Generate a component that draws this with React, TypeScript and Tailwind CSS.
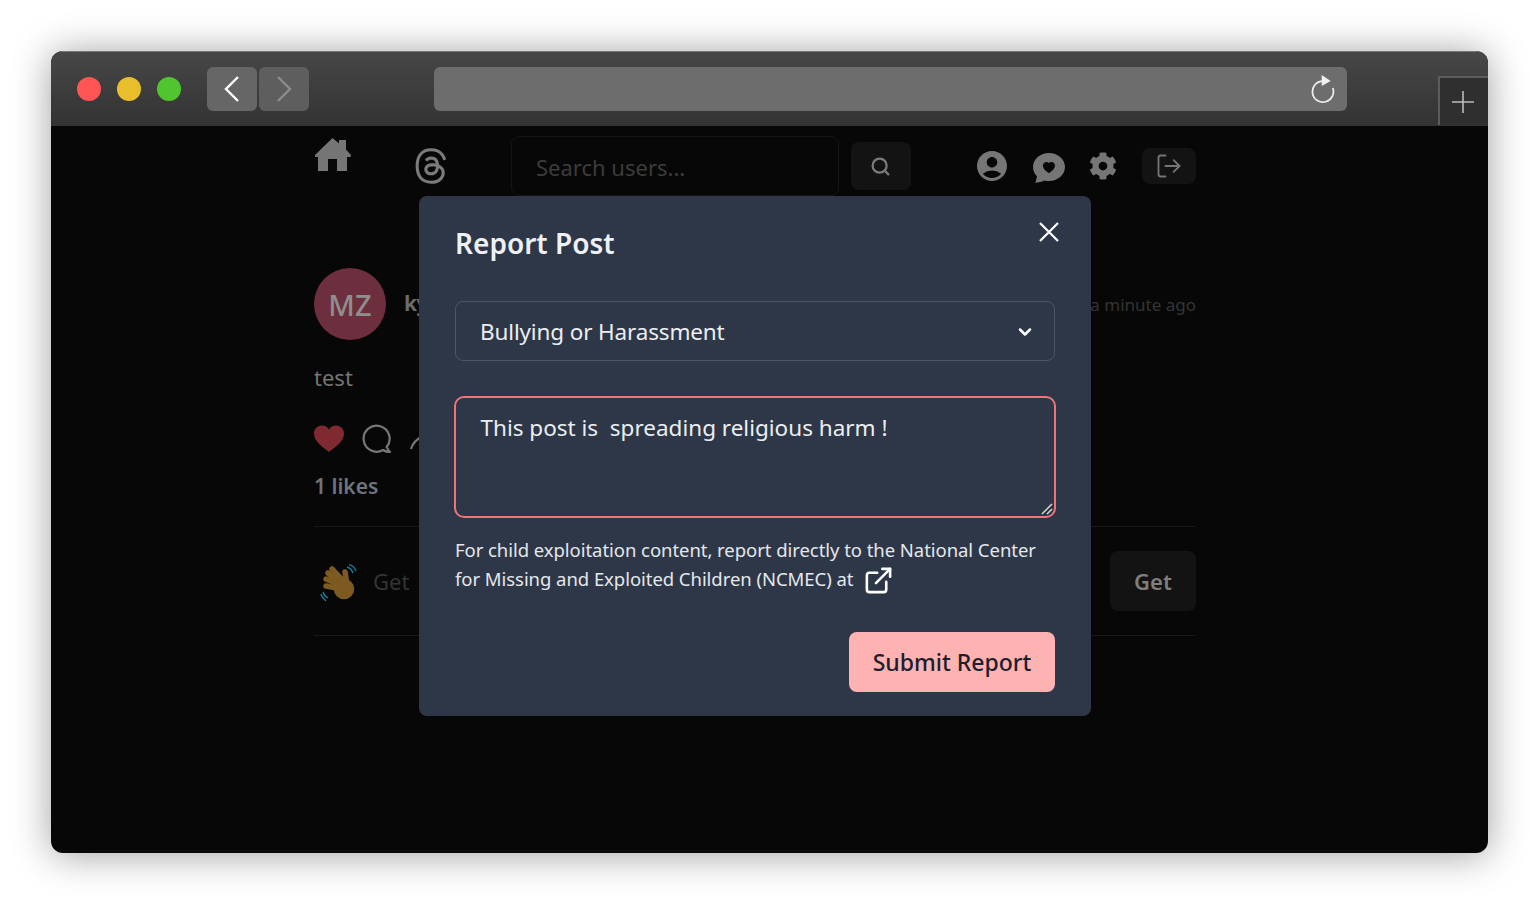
import { BsChatHeartFill } from "react-icons/bs";
import { FaCog } from "react-icons/fa";
import { FaThreads } from "react-icons/fa6";
import { MdAccountCircle } from "react-icons/md";
import { FiChevronDown, FiExternalLink, FiLogOut, FiSearch } from "react-icons/fi";

const fingers = ["M24 22 L8 9", "M24 23 L6 15", "M22 25 L6 22", "M26 20 L12 5"];

const WavingHand = () => (
    <svg width="38" height="38" viewBox="0 0 38 38">
        {fingers.map((d) => (
            <path key={d} d={d} stroke="#050505" strokeWidth="7.5" strokeLinecap="round" />
        ))}
        <path d="M27 20 L25 8" stroke="#050505" strokeWidth="7.5" strokeLinecap="round" />
        <circle cx="24" cy="25" r="11" fill="#7d5a1f" stroke="#050505" strokeWidth="1.5" />
        <path d="M27 20 L25 8" stroke="#7d5a1f" strokeWidth="5.5" strokeLinecap="round" />
        {fingers.map((d) => (
            <path key={d + "f"} d={d} stroke="#7d5a1f" strokeWidth="5.5" strokeLinecap="round" />
        ))}
        <path d="M27 3 Q31 4 33 9 M29 0.5 Q34 2 36 7 M3 28 Q4 32 8 34 M0.8 30 Q2 34 6 37" fill="none" stroke="#1c7f9c" strokeWidth="1.3" />
    </svg>
);

const Dot = ({ color }: { color: string }) => <div className={`w-6 h-6 rounded-full ${color}`} />;

const App = () => {
    return (
        <div className="w-[1539px] h-[904px] bg-white p-[51px] overflow-hidden font-['Noto_Sans',sans-serif]">
            <div className="relative w-[1437px] h-[802px] rounded-xl overflow-hidden bg-[#070707] shadow-[0_2px_38px_rgba(0,0,0,0.38)] flex flex-col">
                {/* browser chrome */}
                <div className="h-[75px] shrink-0 flex items-start bg-gradient-to-b from-[#474747] to-[#333333] border-t border-t-[#777777] pl-[26px]">
                    <div className="flex gap-4 mt-[25px]">
                        <Dot color="bg-[#ff5555]" />
                        <Dot color="bg-[#e8bf2a]" />
                        <Dot color="bg-[#51c52f]" />
                    </div>
                    <div className="flex gap-[2px] ml-[26px] mt-[15px]">
                        <div className="w-[50px] h-[44px] rounded-md bg-[#666666] flex items-center justify-center">
                            <svg width="16" height="26" viewBox="0 0 16 26"><path d="M14 1 L2 13 L14 25" fill="none" stroke="#fff" strokeWidth="2.4" /></svg>
                        </div>
                        <div className="w-[50px] h-[44px] rounded-md bg-[#5e5e5e] flex items-center justify-center">
                            <svg width="16" height="26" viewBox="0 0 16 26"><path d="M2 1 L14 13 L2 25" fill="none" stroke="#8c8c8c" strokeWidth="2.4" /></svg>
                        </div>
                    </div>
                    <div className="w-[913px] h-[44px] ml-[125px] mt-[15px] rounded-md bg-[#6d6d6d] flex items-center justify-end pr-[12px]">
                        <svg width="26" height="30" viewBox="0 0 26 30">
                            <path d="M13 7.2 A10.5 10.5 0 1 0 23.8 14" fill="none" stroke="#f0f0f0" strokeWidth="1.7" />
                            <path d="M12.7 1 L21.7 7 L12.7 12 Z" fill="#f0f0f0" />
                        </svg>
                    </div>
                    <div className="w-[50px] h-[49px] ml-auto mt-[24px] bg-[#2f2f2f] border-l-2 border-t-2 border-[#5c5c5c] pr-[3px] flex items-center justify-center">
                        <svg width="22" height="22" viewBox="0 0 22 22"><path d="M11 0 V22 M0 11 H22" stroke="#bcbcbc" strokeWidth="1.6" /></svg>
                    </div>
                </div>

                {/* dimmed page */}
                <div className="w-[882px] ml-[263px] flex flex-col">
                    <div className="flex items-start h-[142px]">
                        <svg width="36" height="33" viewBox="0 0 36 33" className="mt-[12px] ml-px shrink-0">
                            <path d="M17.5 0 L24 5.5 V2 H31 V11.5 L36 17 L35.5 19 H32 V33 H22 V21 H13 V33 H3 V19 H0 L0 17 Z" fill="#757575" />
                        </svg>
                        <FaThreads className="w-[36px] h-[38px] mt-[21px] ml-[62px] text-[#7b7b7b]" />
                        <div className="w-[328px] h-[60px] ml-[62px] mt-[10px] pt-[2px] rounded-lg border border-[#141414] flex items-center pl-[24px] text-[22px] text-[#3c3c3c]">
                            Search users...
                        </div>
                        <div className="w-[60px] h-[48px] ml-[12px] mt-[16px] rounded-lg bg-[#131313] flex items-center justify-center">
                            <FiSearch className="w-[21px] h-[21px] -ml-[2px] text-[#7a7a7a]" strokeWidth={2.6} />
                        </div>
                        <MdAccountCircle className="w-[36px] h-[36px] ml-[63px] mt-[22px] text-[#767676]" />
                        <BsChatHeartFill className="w-[32px] h-[32px] ml-[23px] mt-[25px] text-[#767676]" />
                        <FaCog className="w-[28px] h-[28px] ml-[24px] mt-[26px] text-[#767676]" />
                        <div className="w-[54px] h-[36px] ml-auto mt-[22px] rounded-lg bg-[#131313] flex items-center justify-center">
                            <FiLogOut className="w-[28px] h-[28px] text-[#757575]" strokeWidth={1.6} />
                        </div>
                    </div>

                    <div className="flex items-center">
                        <div className="w-[72px] h-[72px] pt-[1px] rounded-full bg-[#6d2f3d] flex items-center justify-center text-[#8e8e8e] text-[29px] font-medium">MZ</div>
                        <div className="ml-[18px] text-[21px] tracking-[-0.5px] font-bold text-[#6c6c6c]">kyle</div>
                        <div className="ml-auto pt-[1px] text-[17px] text-[#343434]">a minute ago</div>
                    </div>
                    <div className="mt-[19px] text-[22px] leading-[36px] text-[#757575]">test</div>
                    <div className="flex items-center mt-[29px] h-[30px]">
                        <svg width="30" height="28" viewBox="0 0 30 28">
                            <path d="M15 27 C9 22 0 17 0 8.5 C0 3.5 3.8 0.5 8 0.5 C11 0.5 13.6 2 15 4.5 C16.4 2 19 0.5 22 0.5 C26.2 0.5 30 3.5 30 8.5 C30 17 21 22 15 27 Z" fill="#7e2a30" />
                        </svg>
                        <svg width="30" height="30" viewBox="0 0 30 30" className="ml-[18px]">
                            <path d="M27 27 L24.6 23 A13 13 0 1 0 21 26 Q24 28 28 28 Z" fill="none" stroke="#777777" strokeWidth="2.2" strokeLinejoin="round" />
                        </svg>
                        <svg width="28" height="28" viewBox="0 0 28 28" className="ml-[18px]">
                            <path d="M1 24 Q3 16 14 10" fill="none" stroke="#777777" strokeWidth="2.2" />
                        </svg>
                    </div>
                    <div className="mt-[16px] text-[21px] leading-[32px] font-semibold text-[#6d747d]">1 likes</div>
                    <div className="mt-[24px] border-t border-[#181818]" />
                    <div className="flex items-center h-[108px]">
                        <div className="ml-[6px] mt-[4px]"><WavingHand /></div>
                        <div className="ml-[15px] pt-[1px] text-[22px] text-[#343434]">Get</div>
                        <div className="ml-auto w-[86px] h-[60px] pt-[1px] rounded-lg bg-[#131313] flex items-center justify-center text-[22px] font-semibold text-[#7e7e7e]">Get</div>
                    </div>
                    <div className="border-t border-[#181818]" />
                </div>

                {/* report modal */}
                <div className="absolute left-[368px] top-[145px] w-[672px] h-[520px] rounded-lg bg-[#2d3748] px-[36px] flex flex-col text-white">
                    <div className="flex items-start justify-between shrink-0">
                        <div className="mt-[25px] text-[28px] leading-[44px] font-semibold text-[#eef0f3]">Report Post</div>
                        <svg width="20" height="20" viewBox="0 0 20 20" className="mt-[26px] -mr-[4px]">
                            <path d="M1 1 L19 19 M19 1 L1 19" stroke="#ffffff" strokeWidth="2.2" />
                        </svg>
                    </div>
                    <div className="mt-[36px] h-[60px] shrink-0 rounded-lg border border-[#4b5568] flex items-center justify-between pl-[24px] pr-[19px] text-[22.5px] tracking-[-0.15px] pt-[1px] text-[#eceef1]">
                        Bullying or Harassment
                        <FiChevronDown className="w-[20px] h-[20px] text-white" strokeWidth={3} />
                    </div>
                    <div className="relative mt-[35px] -mx-px h-[122px] shrink-0 rounded-[10px] border-[2.5px] border-[#f0737a] pl-[24.5px] pt-[10px] text-[22.5px] leading-[40px] text-[#eceef1] whitespace-pre">
                        This post is  spreading religious harm !
                        <svg width="14" height="14" viewBox="0 0 14 14" className="absolute right-0 bottom-0">
                            <path d="M2 12 L12 2 M7 12 L12 7" stroke="#d4d4d4" strokeWidth="1.5" />
                            <path d="M3.5 13 L13 3.5" stroke="#222" strokeWidth="1" />
                        </svg>
                    </div>
                    <div className="mt-[17px] text-[18.5px] leading-[29px] tracking-[-0.05px] text-[#e5e7eb] shrink-0">
                        <div>For child exploitation content, report directly to the National Center</div>
                        <div className="flex items-center">
                            for Missing and Exploited Children (NCMEC) at
                            <FiExternalLink className="w-[31px] h-[31px] ml-[10px] -mb-[4px] text-white" strokeWidth={2} />
                        </div>
                    </div>
                    <div className="mt-[39px] flex justify-end shrink-0">
                        <div className="w-[206px] h-[60px] pt-[1px] rounded-lg bg-[#feb2b2] flex items-center justify-center text-[23px] font-medium text-[#1a202c]">Submit Report</div>
                    </div>
                </div>
            </div>
        </div>
    );
};

export default App;
